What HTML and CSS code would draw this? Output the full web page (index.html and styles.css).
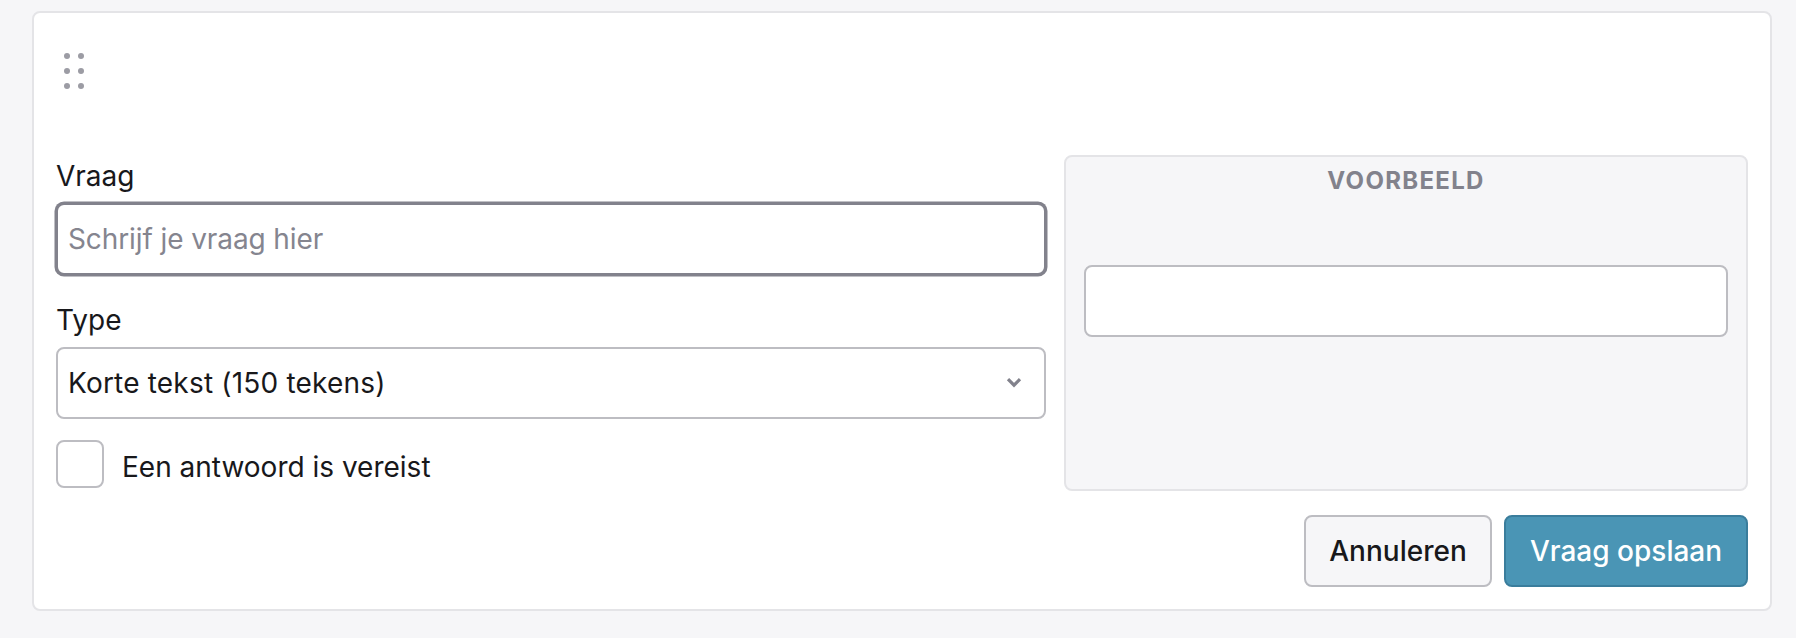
FILE: index.html
```html
<!DOCTYPE html>
<html lang="nl">
<head>
<meta charset="utf-8">
<title>Vraag</title>
<link rel="stylesheet" href="styles.css">
</head>
<body>
<form class="card">
  <div class="drag">
    <svg class="drag-icon" width="26" height="42" viewBox="0 0 26 42" aria-hidden="true">
      <g fill="#9c9ca4">
        <circle cx="4" cy="6" r="3"/><circle cx="18" cy="6" r="3"/>
        <circle cx="4" cy="21" r="3"/><circle cx="18" cy="21" r="3"/>
        <circle cx="4" cy="36" r="3"/><circle cx="18" cy="36" r="3"/>
      </g>
    </svg>
  </div>
  <div class="columns">
    <div class="fields">
      <label class="label label-first" for="q">Vraag</label>
      <input class="control control-focus" id="q" type="text" placeholder="Schrijf je vraag hier">
      <label class="label" for="t">Type</label>
      <div class="select-wrap">
        <select class="control select" id="t">
          <option>Korte tekst (150 tekens)</option>
        </select>
        <svg class="chevron" width="16" height="11" viewBox="0 0 16 11" aria-hidden="true">
          <path d="M2 2.2 8 8.2 14 2.2" fill="none" stroke="#82828c" stroke-width="3.2"/>
        </svg>
      </div>
      <label class="check">
        <input class="checkbox" type="checkbox">
        <span class="check-text">Een antwoord is vereist</span>
      </label>
    </div>
    <section class="preview">
      <h3 class="preview-title">VOORBEELD</h3>
      <div class="preview-body">
        <input class="control" type="text" aria-label="Voorbeeld">
      </div>
    </section>
  </div>
  <div class="actions">
    <button class="btn btn-plain" type="button">Annuleren</button>
    <button class="btn btn-primary" type="button">Vraag opslaan</button>
  </div>
</form>
</body>
</html>
```
FILE: styles.css
```css
* { box-sizing: border-box; }
html, body { height: 100%; }
body {
  margin: 0;
  padding: 11px 24px 27px 32px;
  background: #f6f6f8;
  font-family: Inter, "Liberation Sans", sans-serif;
  font-size: 28px;
  color: #18181b;
}
.card {
  height: 600px;
  padding: 0 22px;
  background: #fff;
  border: 2px solid #e4e4e7;
  border-radius: 8px;
}
.drag {
  height: 142px;
  padding-top: 37px;
  padding-left: 7px;
}
.drag-icon { display: block; }
.columns {
  display: flex;
  gap: 18px;
  height: 336px;
}
.fields {
  width: 990px;
  flex: none;
}
.label {
  display: block;
  height: 34px;
  margin: 28px 0 10px;
  line-height: 34px;
  letter-spacing: 0;
}
.label-first { margin: 0 0 13px; padding-top: 0; height: 35px; line-height: 42px; }
.control {
  display: block;
  width: 100%;
  height: 72px;
  padding: 0 10px;
  font: inherit;
  color: #18181b;
  background: #fff;
  border: 2px solid #bdbdc2;
  border-radius: 8px;
  outline: none;
}
.control::placeholder { color: #85858f; opacity: 1; letter-spacing: -0.1px; }
.control-focus {
  border-color: #82828c;
  box-shadow: 0 0 0 1.5px #82828c;
}
.select-wrap { position: relative; }
.select { appearance: none; -webkit-appearance: none; letter-spacing: 0.2px; }
.chevron {
  position: absolute;
  right: 24px;
  top: 30px;
}
.check {
  display: flex;
  align-items: center;
  gap: 18px;
  margin-top: 21px;
}
.check-text { position: relative; top: 3px; }
.checkbox {
  appearance: none;
  -webkit-appearance: none;
  display: block;
  width: 48px;
  height: 48px;
  margin: 0;
  background: #fff;
  border: 2px solid #bdbdc2;
  border-radius: 8px;
}
.preview {
  flex: 1;
  display: flex;
  flex-direction: column;
  background: #f6f6f8;
  border: 2px solid #e4e4e7;
  border-radius: 8px;
  padding: 0 18px;
}
.preview-title {
  margin: 0;
  padding-top: 10px;
  font-size: 24px;
  line-height: 28px;
  font-weight: 700;
  letter-spacing: 1.3px;
  text-align: center;
  color: #82828c;
}
.preview-body { padding-top: 70px; }
.actions {
  display: flex;
  justify-content: flex-end;
  gap: 12px;
  margin-top: 24px;
}
.btn {
  height: 72px;
  padding: 0 20px;
  font: inherit;
  font-weight: 500;
  border-radius: 8px;
  border: 2px solid;
}
.btn-plain {
  width: 188px;
  background: #f6f6f8;
  border-color: #bdbdc2;
  color: #18181b;
}
.btn-primary {
  width: 244px;
  background: #4a95b5;
  border-color: #3a7d9c;
  color: #fff;
}
```
